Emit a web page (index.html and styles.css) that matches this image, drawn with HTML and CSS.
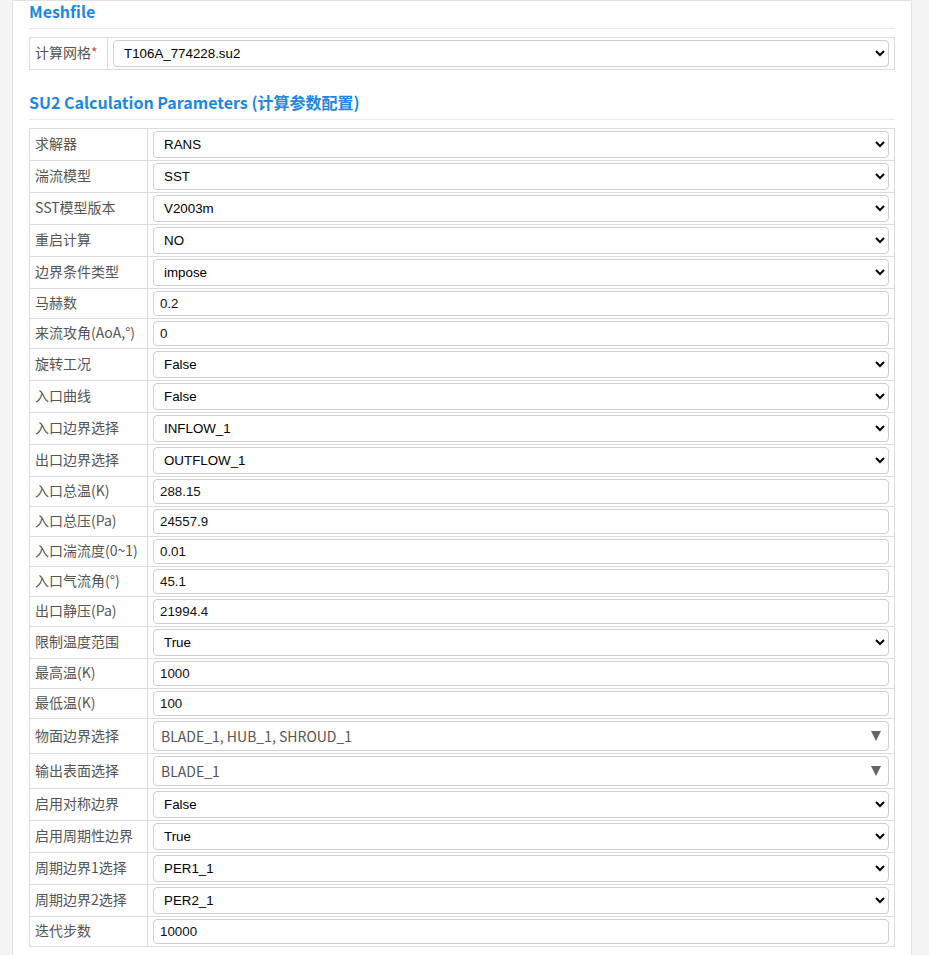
FILE: index.html
```html
<!DOCTYPE html>
<html lang="zh-CN">
<head>
<meta charset="utf-8">
<title>SU2 Calculation Parameters</title>
<link rel="stylesheet" href="styles.css">
</head>
<body>
<div class="panel">
  <h3 class="section-title">Meshfile</h3>
  <table class="form-table">
    <tr>
      <td class="label mesh-label">计算网格<span class="req">*</span></td>
      <td class="field"><select class="sel"><option>T106A_774228.su2</option></select></td>
    </tr>
  </table>

  <h3 class="section-title second">SU2 Calculation Parameters (计算参数配置)</h3>
  <table class="form-table">
    <tr><td class="label">求解器</td><td class="field"><select class="sel"><option>RANS</option></select></td></tr>
    <tr><td class="label">湍流模型</td><td class="field"><select class="sel"><option>SST</option></select></td></tr>
    <tr><td class="label">SST模型版本</td><td class="field"><select class="sel"><option>V2003m</option></select></td></tr>
    <tr><td class="label">重启计算</td><td class="field"><select class="sel"><option>NO</option></select></td></tr>
    <tr><td class="label">边界条件类型</td><td class="field"><select class="sel"><option>impose</option></select></td></tr>
    <tr><td class="label">马赫数</td><td class="field"><input class="txt" type="text" value="0.2"></td></tr>
    <tr><td class="label">来流攻角(AoA,°)</td><td class="field"><input class="txt" type="text" value="0"></td></tr>
    <tr><td class="label">旋转工况</td><td class="field"><select class="sel"><option>False</option></select></td></tr>
    <tr><td class="label">入口曲线</td><td class="field"><select class="sel"><option>False</option></select></td></tr>
    <tr><td class="label">入口边界选择</td><td class="field"><select class="sel"><option>INFLOW_1</option></select></td></tr>
    <tr><td class="label">出口边界选择</td><td class="field"><select class="sel"><option>OUTFLOW_1</option></select></td></tr>
    <tr><td class="label">入口总温(K)</td><td class="field"><input class="txt" type="text" value="288.15"></td></tr>
    <tr><td class="label">入口总压(Pa)</td><td class="field"><input class="txt" type="text" value="24557.9"></td></tr>
    <tr><td class="label">入口湍流度(0~1)</td><td class="field"><input class="txt" type="text" value="0.01"></td></tr>
    <tr><td class="label">入口气流角(°)</td><td class="field"><input class="txt" type="text" value="45.1"></td></tr>
    <tr><td class="label">出口静压(Pa)</td><td class="field"><input class="txt" type="text" value="21994.4"></td></tr>
    <tr><td class="label">限制温度范围</td><td class="field"><select class="sel"><option>True</option></select></td></tr>
    <tr><td class="label">最高温(K)</td><td class="field"><input class="txt" type="text" value="1000"></td></tr>
    <tr><td class="label">最低温(K)</td><td class="field"><input class="txt" type="text" value="100"></td></tr>
    <tr><td class="label">物面边界选择</td><td class="field"><div class="multi"><span class="multi-text">BLADE_1, HUB_1, SHROUD_1</span><span class="caret"></span></div></td></tr>
    <tr><td class="label">输出表面选择</td><td class="field"><div class="multi"><span class="multi-text">BLADE_1</span><span class="caret"></span></div></td></tr>
    <tr><td class="label">启用对称边界</td><td class="field"><select class="sel"><option>False</option></select></td></tr>
    <tr><td class="label">启用周期性边界</td><td class="field"><select class="sel"><option>True</option></select></td></tr>
    <tr><td class="label">周期边界1选择</td><td class="field"><select class="sel"><option>PER1_1</option></select></td></tr>
    <tr><td class="label">周期边界2选择</td><td class="field"><select class="sel"><option>PER2_1</option></select></td></tr>
    <tr><td class="label">迭代步数</td><td class="field"><input class="txt" type="text" value="10000"></td></tr>
  </table>
</div>
</body>
</html>
```

FILE: styles.css
```css
html, body {
  margin: 0;
  padding: 0;
}
body {
  background: #f4f4f4;
  font-family: "Noto Sans CJK SC", "Noto Sans", sans-serif;
  color: #555;
}
.panel {
  margin-left: 12px;
  width: 866px;
  padding: 0 16px 40px;
  background: #fff;
  border: 1px solid #e2e2e2;
}
.section-title {
  margin: 0 0 8px;
  padding-bottom: 7px;
  font-size: 16px;
  line-height: 20px;
  font-weight: 700;
  color: #1a87e6;
  border-bottom: 1px solid #eaeaea;
}
.section-title.second {
  margin-top: 22px;
}
.form-table {
  width: 100%;
  border-collapse: collapse;
}
.form-table td {
  border: 1px solid #dcdcdc;
  padding: 2px 5px;
  vertical-align: middle;
}
.form-table td.label {
  width: 107px;
  padding: 0 5px 3px;
  font-size: 14px;
  line-height: 18px;
  color: #555;
  white-space: nowrap;
}
.form-table td.mesh-label {
  width: 67px;
}
.req {
  color: #e53935;
}
.sel {
  display: block;
  width: 100%;
  height: 27px;
  box-sizing: border-box;
  border: 1px solid #cfcfcf;
  border-radius: 4px;
  background: #fff;
  padding: 0 6px;
  font-family: "Liberation Sans", Arial, sans-serif;
  font-size: 13.33px;
  color: #000;
  margin: 0;
}
.txt {
  display: block;
  width: 100%;
  height: 25px;
  box-sizing: border-box;
  border: 1px solid #cfcfcf;
  border-radius: 4px;
  background: #fff;
  padding: 0 6px;
  font-family: "Liberation Sans", Arial, sans-serif;
  font-size: 13.33px;
  color: #111;
  margin: 0;
}
.multi {
  display: flex;
  align-items: center;
  justify-content: space-between;
  height: 30px;
  box-sizing: border-box;
  border: 1px solid #cfcfcf;
  border-radius: 4px;
  background: #fff;
  padding: 0 7px 0 7px;
  font-size: 14px;
  color: #555;
}
.caret {
  width: 0;
  height: 0;
  border-left: 5.5px solid transparent;
  border-right: 5.5px solid transparent;
  border-top: 10px solid #666;
}
```
